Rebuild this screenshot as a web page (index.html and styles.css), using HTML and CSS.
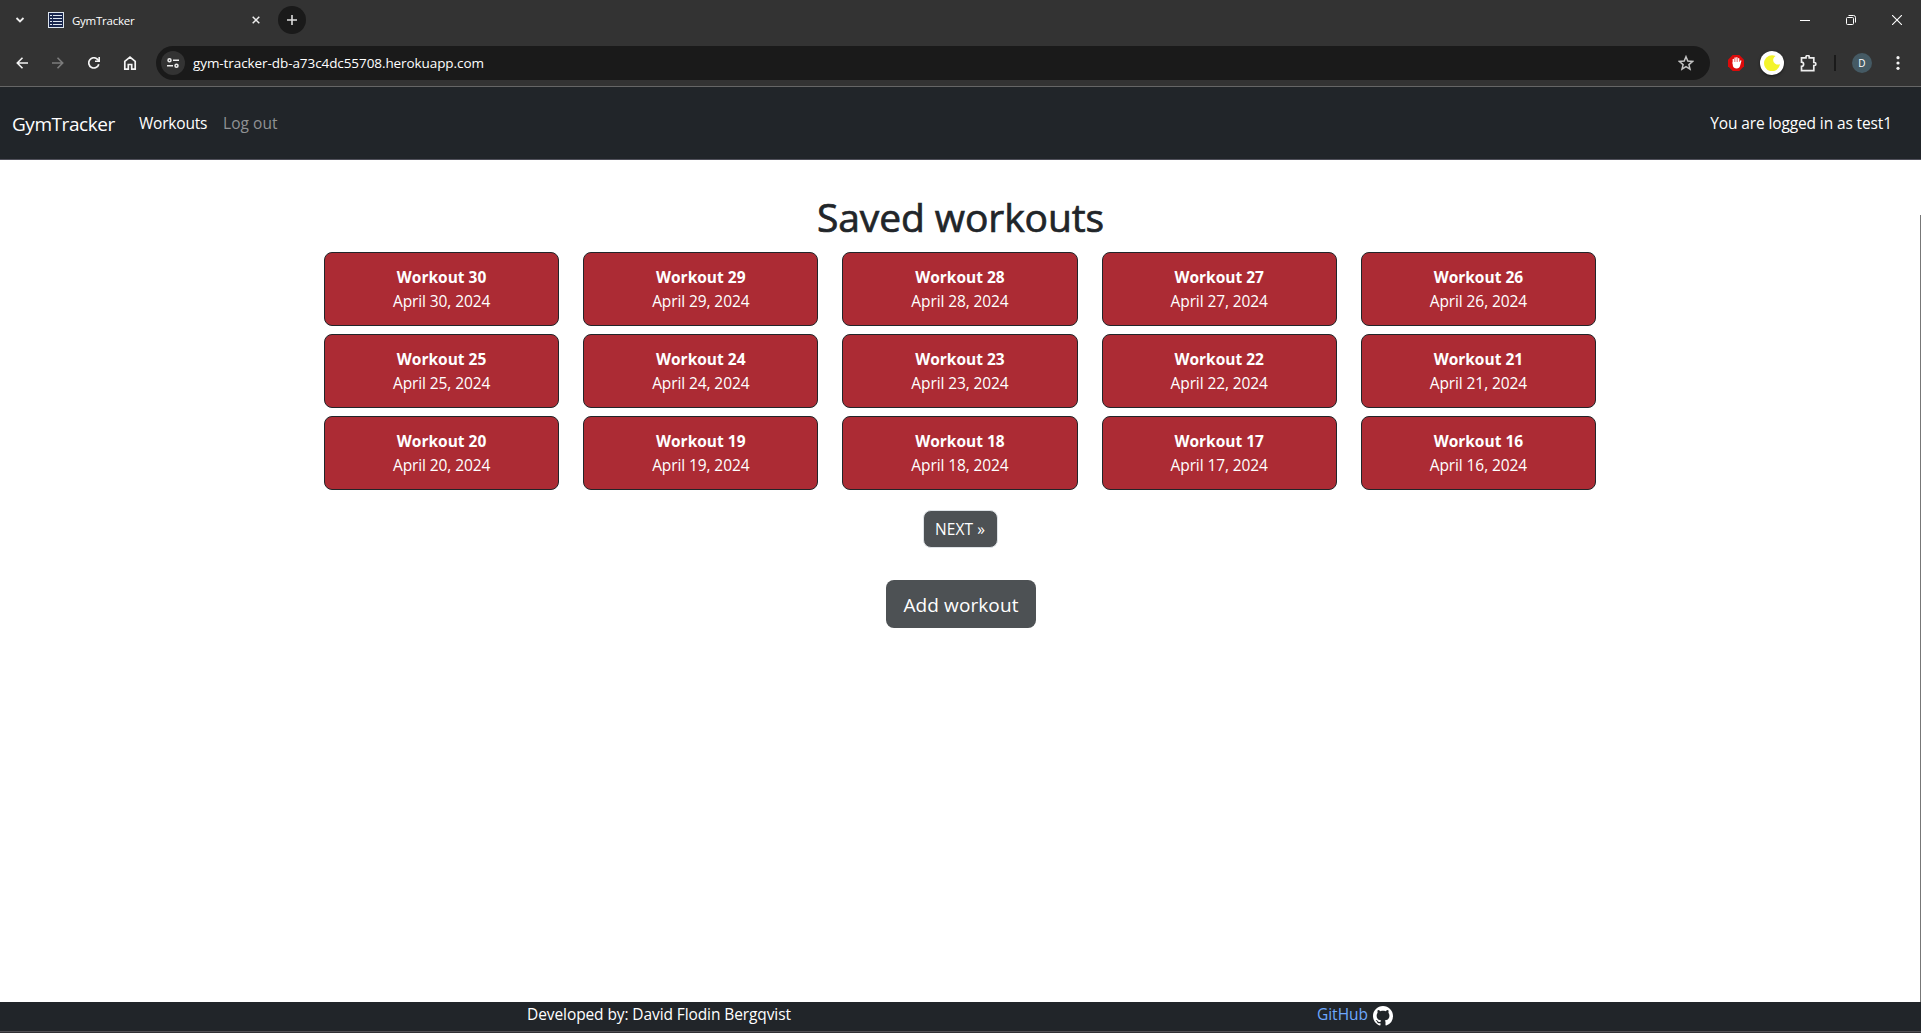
FILE: index.html
```html
<!DOCTYPE html>
<html lang="en">
<head>
<meta charset="utf-8">
<title>GymTracker</title>
<link rel="stylesheet" href="styles.css">
</head>
<body>
<header class="browser">
  <div class="tabs">
    <svg class="chevron" width="10" height="8" viewBox="0 0 10 8"><path d="M1.500 2 5 5.500 8.500 2" fill="none" stroke="#eee" stroke-width="1.800"/></svg>
    <svg class="favicon" width="16" height="16" viewBox="0 0 16 16"><path fill="#dce5ee" d="M0 0h16v16H0z"/><path fill="#17254d" d="M1 1h14v14H1z"/><path d="M2 3.500h2M5 3.500h9M2 6.500h2M5 6.500h9M2 9.500h2M5 9.500h9M2 12.500h2M5 12.500h9" stroke="#dce5ee"/></svg>
    <span class="tab-title">GymTracker</span>
    <svg class="tab-close" width="8" height="8" viewBox="0 0 8 8"><path d="m.7.7 6.600 6.600M7.300.7.7 7.300" stroke="#eee" stroke-width="1.500"/></svg>
    <span class="new-tab"><svg width="12" height="12" viewBox="0 0 12 12"><path d="M6 1v10M1 6h10" stroke="#ddd" stroke-width="1.600"/></svg></span>
    <div class="window-buttons">
      <svg width="10" height="10" viewBox="0 0 10 10"><path d="M0 5.500h10" stroke="#fff"/></svg>
      <svg width="10" height="10" viewBox="0 0 10 10"><g fill="none" stroke="#fff"><rect x=".5" y="2.500" width="7" height="7" rx="1"/><path d="M2.500.5h5a2 2 0 0 1 2 2v5"/></g></svg>
      <svg width="10" height="10" viewBox="0 0 10 10"><path d="m0 0 10 10M10 0 0 10" stroke="#fff" stroke-width="1.100"/></svg>
    </div>
  </div>
  <div class="toolbar">
    <div class="nav-icons">
      <svg width="12" height="12" viewBox="0 0 12 12"><path d="M12 6H1.500M6.500.8 1.300 6l5.200 5.200" fill="none" stroke="#f4f4f4" stroke-width="1.600"/></svg>
      <svg width="12" height="12" viewBox="0 0 12 12"><path d="M0 6h10.500M5.500.8 10.700 6l-5.200 5.200" fill="none" stroke="#7c7c7c" stroke-width="1.600"/></svg>
      <svg width="12" height="12" viewBox="0 0 12 12"><path d="M10.800 7.200A5.100 5.100 0 1 1 9.800 2.600L11 4" fill="none" stroke="#f4f4f4" stroke-width="1.700"/><path d="M12 0v5H7V3.600h3.400V0z" fill="#f4f4f4"/></svg>
      <svg class="home" width="14" height="14" viewBox="0 0 14 14"><path d="M1.800 13.200V5.300L7 1.200l5.200 4.100v7.900H8.700V8.500H5.300v4.700z" fill="none" stroke="#f4f4f4" stroke-width="1.700"/></svg>
    </div>
    <div class="address">
      <span class="site-info"><svg width="12" height="10" viewBox="0 0 12 10"><g fill="none" stroke="#eee" stroke-width="1.500"><circle cx="2.500" cy="2.300" r="1.500"/><circle cx="9.500" cy="7.700" r="1.500"/><path d="M6 2.300h6M0 7.700h6"/></g></svg></span>
      <span class="url">gym-tracker-db-a73c4dc55708.herokuapp.com</span>
      <svg class="star" width="16" height="16" viewBox="0 0 16 16"><path d="m8 1.700 1.800 4.400 4.700.4-3.600 3.100 1.100 4.600L8 11.700l-4 2.500 1.100-4.600L1.500 6.500l4.700-.4z" fill="none" stroke="#c4c4c4" stroke-width="1.500"/></svg>
    </div>
    <svg class="blocker" width="16" height="16" viewBox="0 0 16 16"><path d="M4.700 0h6.600L16 4.700v6.600L11.300 16H4.700L0 11.300V4.700z" fill="#dc0a0a"/><path d="M5.300 8.500V4.300M7.100 8V3M8.900 8V2.700M10.700 8V3.700" stroke="#fff" stroke-width="1.350" stroke-linecap="round"/><path d="M4.700 7h6.700l1-1.500c.5-.6 1.200-.2 1 .5l-1.300 4.800c-.5 1.900-1.500 2.700-3.300 2.700-2.600 0-4.100-1.400-4.100-3.900z" fill="#fff"/></svg>
    <span class="moon"><svg width="16" height="16" viewBox="0 0 16 16"><path d="M11.500 1A8 8 0 1 0 16 9a4.300 4.300 0 1 1-4.500-8z" fill="#f4f42c"/></svg></span>
    <svg class="puzzle" width="17" height="17" viewBox="0 0 17 17"><path d="M1.500 2.800H6V2a1.600 1.600 0 0 1 3.200 0v.8h4.600v4.700h.6a1.500 1.500 0 0 1 0 3h-.6v5.200H1.500v-4.300a2.100 2.100 0 0 0 0-4.200z" fill="none" stroke="#eee" stroke-width="1.700"/></svg>
    <span class="separator"></span>
    <span class="profile">D</span>
    <svg class="menu" width="4" height="14" viewBox="0 0 4 14"><g fill="#f4f4f4"><circle cx="2" cy="1.700" r="1.600"/><circle cx="2" cy="7" r="1.600"/><circle cx="2" cy="12.300" r="1.600"/></g></svg>
  </div>
</header>
<nav class="navbar">
  <a class="brand">GymTracker</a>
  <a class="link active">Workouts</a>
  <a class="link logout">Log out</a>
  <span class="user">You are logged in as test1</span>
</nav>
<main class="content">
  <h1 class="title">Saved workouts</h1>
  <div class="cards">
    <a class="card"><b>Workout 30</b><span>April 30, 2024</span></a>
    <a class="card"><b>Workout 29</b><span>April 29, 2024</span></a>
    <a class="card"><b>Workout 28</b><span>April 28, 2024</span></a>
    <a class="card"><b>Workout 27</b><span>April 27, 2024</span></a>
    <a class="card"><b>Workout 26</b><span>April 26, 2024</span></a>
    <a class="card"><b>Workout 25</b><span>April 25, 2024</span></a>
    <a class="card"><b>Workout 24</b><span>April 24, 2024</span></a>
    <a class="card"><b>Workout 23</b><span>April 23, 2024</span></a>
    <a class="card"><b>Workout 22</b><span>April 22, 2024</span></a>
    <a class="card"><b>Workout 21</b><span>April 21, 2024</span></a>
    <a class="card"><b>Workout 20</b><span>April 20, 2024</span></a>
    <a class="card"><b>Workout 19</b><span>April 19, 2024</span></a>
    <a class="card"><b>Workout 18</b><span>April 18, 2024</span></a>
    <a class="card"><b>Workout 17</b><span>April 17, 2024</span></a>
    <a class="card"><b>Workout 16</b><span>April 16, 2024</span></a>
  </div>
  <a class="next">NEXT »</a>
  <a class="add">Add workout</a>
  <span class="scrollbar"></span>
</main>
<footer class="footer">
  <div class="footer-col credit">Developed by: David Flodin Bergqvist</div>
  <div class="footer-col github"><span>GitHub</span>
    <svg width="20" height="20" viewBox="0 0 16 16"><path fill="#fff" d="M8 0C3.580 0 0 3.580 0 8c0 3.540 2.290 6.530 5.470 7.590.4.070.55-.17.55-.38 0-.19-.01-.82-.01-1.490-2.010.37-2.530-.49-2.690-.94-.09-.23-.48-.94-.82-1.130-.28-.15-.68-.52-.01-.53.63-.01 1.080.58 1.230.82.72 1.210 1.870.87 2.330.66.07-.52.28-.87.51-1.070-1.780-.2-3.640-.89-3.640-3.950 0-.87.31-1.590.82-2.150-.08-.2-.36-1.020.08-2.120 0 0 .67-.21 2.200.82.64-.18 1.320-.27 2-.27s1.360.09 2 .27c1.530-1.040 2.200-.82 2.200-.82.44 1.100.16 1.920.08 2.120.51.56.82 1.270.82 2.150 0 3.070-1.870 3.750-3.650 3.950.29.25.54.73.54 1.480 0 1.070-.01 1.930-.01 2.200 0 .21.15.46.55.38A8.010 8.010 0 0 0 16 8c0-4.420-3.580-8-8-8z"/></svg>
  </div>
</footer>
</body>
</html>
```
FILE: styles.css
```css
* { box-sizing: border-box; }
body { margin: 0; height: 1033px; display: flex; flex-direction: column; overflow: hidden; background: #fff; color: #212529; font: 15.5px/24px "Open Sans", sans-serif; }
svg { display: block; flex: none; }
.browser { height: 87px; flex: none; background: #333; border-bottom: 1px solid #666; color: #fff; }
.tabs { height: 40px; display: flex; align-items: center; padding-left: 15px; }
.favicon { margin-left: 23px; }
.tab-title { width: 180px; margin-left: 8px; padding-top: 1px; font-size: 11.5px; letter-spacing: -0.25px; }
.new-tab { width: 28px; height: 28px; margin-left: 18px; border-radius: 50%; background: #1a1a1a; display: grid; place-items: center; }
.window-buttons { display: flex; gap: 36px; margin-left: auto; padding-right: 19px; }
.toolbar { height: 46px; display: flex; align-items: center; padding: 0 21px 0 16px; }
.nav-icons { display: flex; align-items: center; gap: 24px; }
.home { margin-left: -1px; }
.address { width: 1554px; height: 34px; margin-left: 19px; padding: 0 16px 0 5px; display: flex; align-items: center; border-radius: 17px; background: #1a1a1a; }
.site-info { width: 24px; height: 24px; border-radius: 50%; background: #333; display: grid; place-items: center; }
.url { margin-left: 8px; font-size: 13.5px; letter-spacing: -0.08px; }
.star { margin-left: auto; }
.blocker { margin-left: 18px; }
.moon { width: 24px; height: 24px; margin-left: 16px; display: grid; place-items: center; border-radius: 50%; background: #fff; box-shadow: 0 1px 3px #0008; }
.puzzle { margin-left: 16px; }
.separator { width: 2px; height: 16px; margin-left: 17px; background: #1a1a1a; }
.profile { width: 20px; height: 20px; margin-left: 16px; border-radius: 50%; background: #455a64; font-size: 10px; line-height: 20px; text-align: center; }
.menu { margin-left: auto; }
.navbar { height: 73px; flex: none; display: flex; align-items: center; padding: 0 29px 0 12px; background: #212529; border-bottom: 1px solid #50505a; color: #fff; }
.brand { width: 127px; padding-top: 1px; font-size: 19px; letter-spacing: -0.45px; }
.active { width: 84px; letter-spacing: -0.2px; }
.logout { color: #909294; letter-spacing: 0.05px; }
.user { margin-left: auto; letter-spacing: -0.12px; }
.content { position: relative; flex: 1; display: flex; flex-direction: column; align-items: center; padding: 33px 0 0; }
.title { margin: 0; height: 59px; font-size: 39px; line-height: 48px; font-weight: 500; letter-spacing: -0.1px; -webkit-text-stroke: 0.7px #212529; }
.cards { width: 1272px; margin-right: 1px; display: grid; grid-template-columns: repeat(5, 1fr); gap: 8px 24px; }
.card { height: 74px; display: flex; flex-direction: column; align-items: center; justify-content: center; border: 1px solid #212529; border-radius: 8px; background: #ac2b34; color: #fff; letter-spacing: -0.1px; }
.card b { letter-spacing: 0; }
.next { width: 75px; height: 38px; margin: 20px 1px 0 0; border: 1px solid #dee2e6; border-radius: 8px; background: #4d5154; color: #fff; text-align: center; line-height: 36px; letter-spacing: 0.1px; }
.add { width: 150px; height: 48px; margin: 32px 0 0 1px; padding-top: 1px; border-radius: 8px; background: #4d5154; color: #fff; text-align: center; font-size: 19px; line-height: 48px; letter-spacing: 0.1px; }
.scrollbar { position: absolute; right: 0; top: 55px; bottom: 0; width: 1px; background: #777; }
.footer { height: 31px; flex: none; display: grid; grid-template-columns: 696px 696px; padding: 0 0 0 311px; background: #212529; border-bottom: 1px solid #303034; box-shadow: inset 0 -1px #505055; color: #fff; }
.footer-col { display: flex; justify-content: center; }
.credit { letter-spacing: -0.1px; }
.github { gap: 5px; color: #6ea8fe; }
.github svg { margin-top: 4px; }
```
